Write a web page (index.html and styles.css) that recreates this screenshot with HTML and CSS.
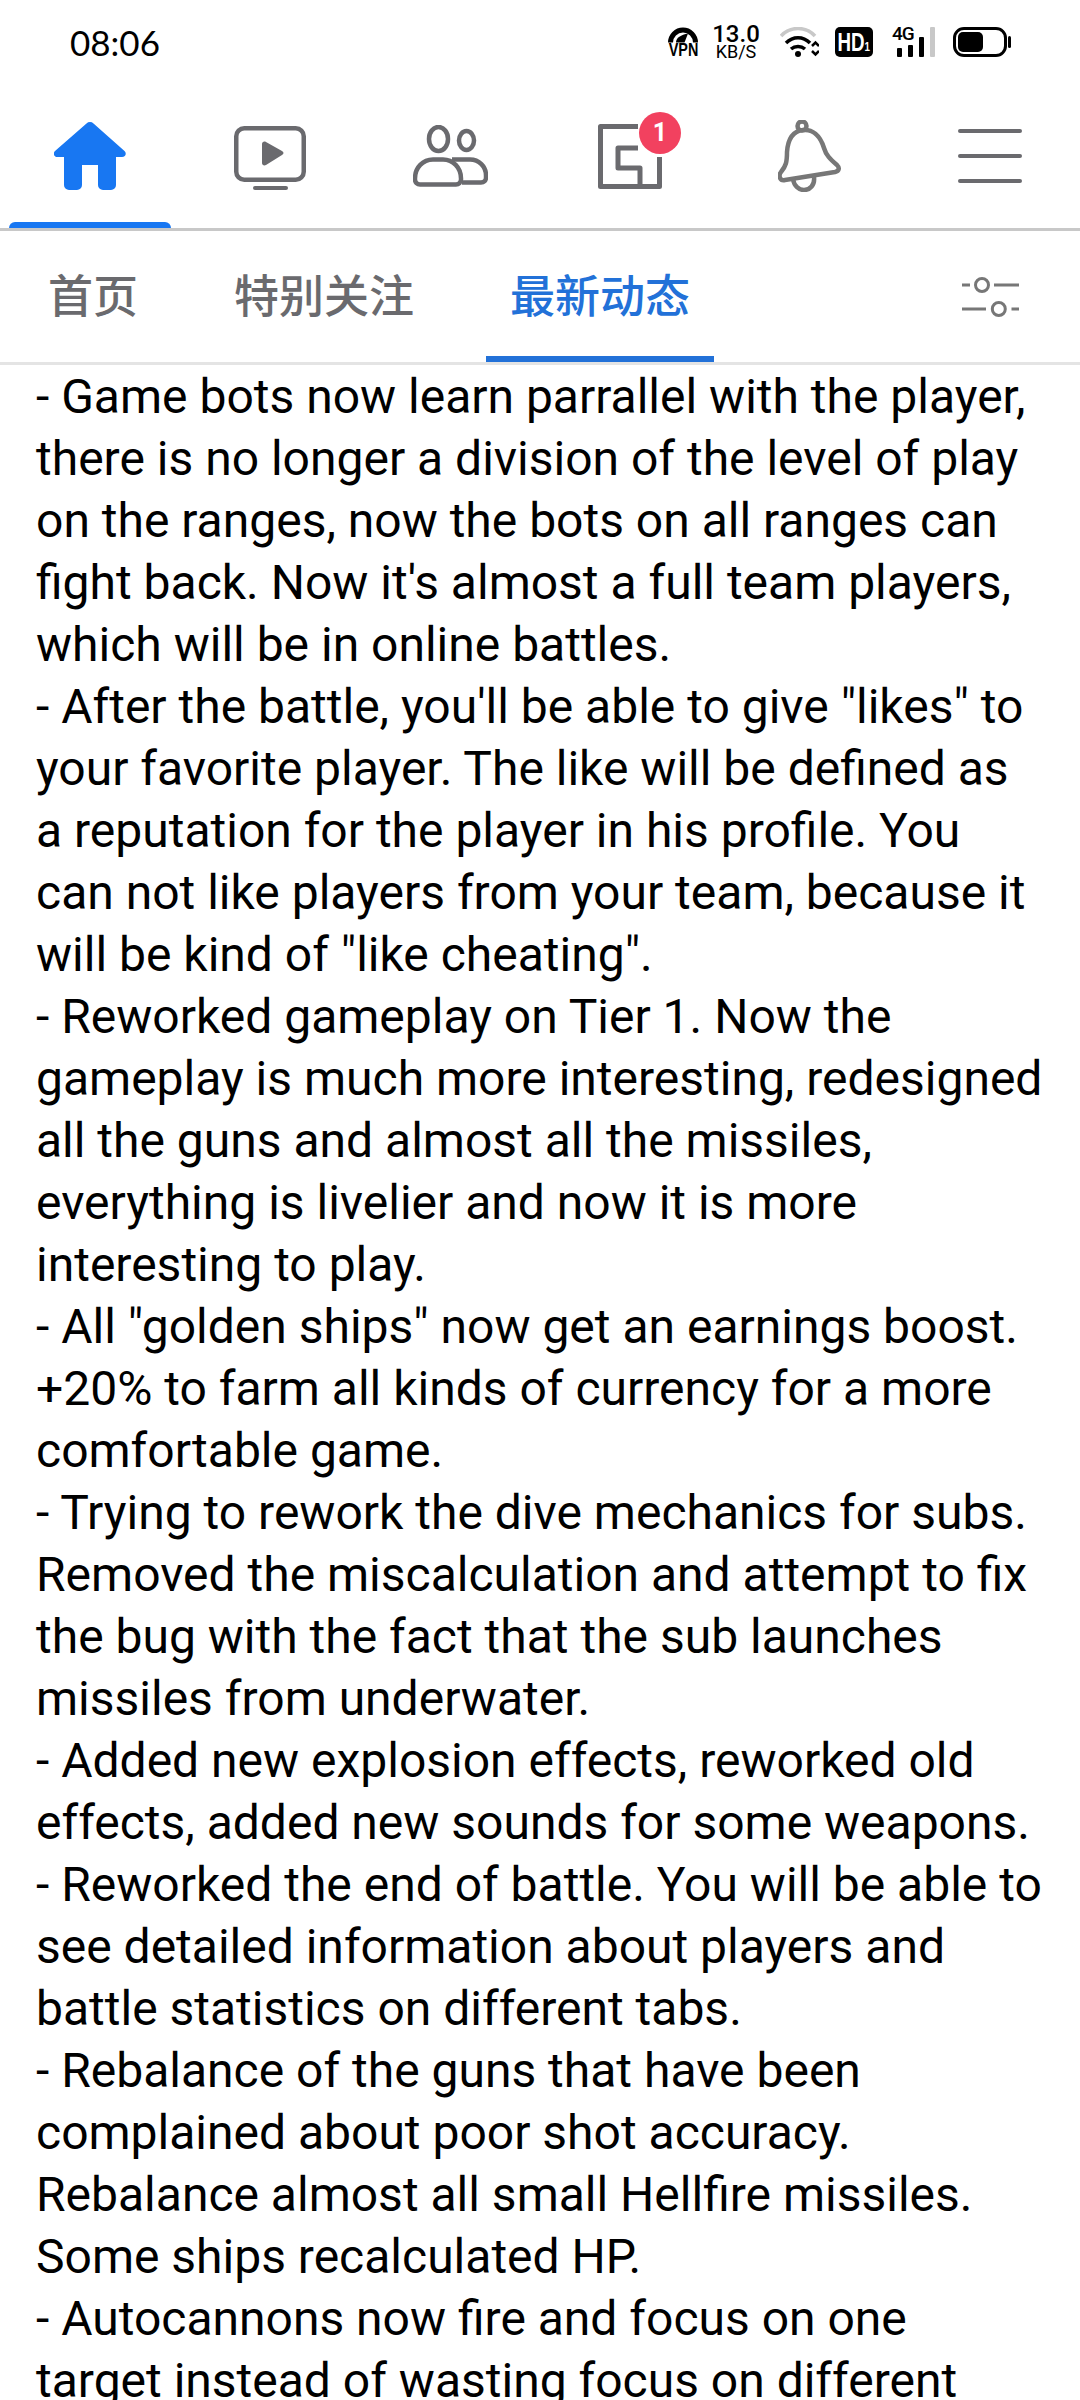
FILE: index.html
```html
<!DOCTYPE html>
<html lang="en">
<head>
    <meta charset="UTF-8">
    <title>Feed</title>
    <link rel="stylesheet" href="styles.css">
</head>
<body>
    <div class="status-bar">
        <span class="clock">08:06</span>
        <div class="status-icons">
            <div class="vpn">
                <svg width="30" height="16" viewBox="0 0 30 16">
                    <path d="M0 15.500A15 15 0 0 1 30 15.500h-5A10 10 0 0 0 5 15.500z" fill="#000"/>
                    <path d="M8 15.500C8 10.500 13 8 20 6.500L16.500 15.500z" fill="#000"/>
                </svg>
                <span>VPN</span>
            </div>
            <div class="speed"><span class="speed-num">13.0</span><span class="speed-unit">KB/S</span></div>
            <svg class="wifi" width="39" height="30" viewBox="0 0 39 30">
                <path d="M1 9C10 -1 26 -1 35 9" fill="none" stroke="#c8c8c8" stroke-width="3.500"/>
                <path d="M6 16C13 9 23 9 30 16" fill="none" stroke="#000" stroke-width="3.500"/>
                <path d="M11 22C15 18.500 21 18.500 25 22" fill="none" stroke="#000" stroke-width="3.500"/>
                <circle cx="18" cy="27" r="3" fill="#000"/>
                <path d="M32 19l3.500-3.500 3.500 3.500M32 24l3.500 3.500 3.500-3.500" fill="none" stroke="#000" stroke-width="2.500"/>
            </svg>
            <div class="hd"><span>HD<small>1</small></span></div>
            <div class="signal">
                <span class="signal-label">4G</span>
                <div class="signal-bars">
                    <i class="bar-1"></i><i class="bar-2"></i><i class="bar-3"></i><i class="bar-4"></i>
                </div>
            </div>
            <div class="battery"><div class="battery-level"></div></div>
            <div class="battery-cap"></div>
        </div>
    </div>

    <nav class="top-nav">
        <a class="nav-item active">
            <svg width="72" height="68" viewBox="0 0 72 68"><path d="M32.500 1.500a5 5 0 0 1 7 0L70.500 29c2.500 2.500 1 6-2.500 6H62v28a5 5 0 0 1-5 5H49a5 5 0 0 1-5-5V43H28v20a5 5 0 0 1-5 5H15a5 5 0 0 1-5-5V35H3.500C0 35-1.500 31.500 1 29z" fill="#1877f2"/></svg>
        </a>
        <a class="nav-item">
            <svg class="tv-icon" width="72" height="64" viewBox="0 0 72 64">
                <rect x="2.250" y="2.250" width="67.500" height="51.500" rx="8" fill="none" stroke="#6a6a6e" stroke-width="4.500"/>
                <path d="M28 18c0-2 2-3 4-2l16 9c2 1 2 3 0 4l-16 10c-2 1-4 0-4-2z" fill="#6a6a6e"/>
                <rect x="19" y="60" width="35" height="4" rx="2" fill="#6a6a6e"/>
            </svg>
        </a>
        <a class="nav-item">
            <svg width="75" height="62" viewBox="0 0 75 62" fill="none" stroke="#6a6a6e" stroke-width="4.500">
                <ellipse cx="25.500" cy="14" rx="9.500" ry="12"/>
                <ellipse cx="53.500" cy="15.500" rx="7.500" ry="9.500"/>
                <path d="M8 59.500h35a5 5 0 0 0 5-5v-1c0-11-8-19-18-19H20c-10 0-18 8-18 19v1a5 5 0 0 0 5 5z" stroke-linejoin="round"/>
                <path d="M39 34.500h18c9 0 16 7 16 16v2c0 3-2 5-5 5H49"/>
            </svg>
        </a>
        <a class="nav-item">
            <div class="gaming-icon">
                <svg width="64" height="65" viewBox="0 0 64 65" fill="none" stroke="#6a6a6e" stroke-width="5" stroke-linejoin="round">
                    <path d="M40 2.500H2.500v60h59V33M40 24H20v20h22v18"/>
                </svg>
                <span class="badge">1</span>
            </div>
        </a>
        <a class="nav-item">
            <svg width="64" height="72" viewBox="0 0 64 72" fill="none" stroke="#777" stroke-width="4.500" stroke-linejoin="round">
                <circle cx="24" cy="6" r="4.500"/>
                <path d="M7 60c-5 1-7-4-4-8 5-6 6-10 6-20 1-14 7-21 16-22 9-1 17 5 21 18 2 7 6 11 13 17 3 3 2 6-2 7z"/>
                <path d="M15 59c1 7 6 11 11 11 6 0 11-5 10-13"/>
            </svg>
        </a>
        <a class="nav-item">
            <div class="burger"><i></i><i></i><i></i></div>
        </a>
    </nav>

    <div class="sub-nav">
        <a class="sub-tab">首页</a>
        <a class="sub-tab">特别关注</a>
        <a class="sub-tab current">最新动态</a>
        <svg class="filter-icon" width="57" height="40" viewBox="0 0 57 40" fill="none" stroke="#777" stroke-width="3">
            <path d="M0 8h8M32 8h25M0 32h24M49.500 32h7.500"/>
            <circle cx="20" cy="8" r="6.500"/>
            <circle cx="36.800" cy="32" r="6.500"/>
        </svg>
    </div>

    <div class="post-text">
        <p>- Game bots now learn parrallel with the player,</p>
        <p>there is no longer a division of the level of play</p>
        <p>on the ranges, now the bots on all ranges can</p>
        <p>fight back. Now it's almost a full team players,</p>
        <p>which will be in online battles.</p>
        <p>- After the battle, you'll be able to give "likes" to</p>
        <p>your favorite player. The like will be defined as</p>
        <p>a reputation for the player in his profile. You</p>
        <p>can not like players from your team, because it</p>
        <p>will be kind of "like cheating".</p>
        <p>- Reworked gameplay on Tier 1. Now the</p>
        <p>gameplay is much more interesting, redesigned</p>
        <p>all the guns and almost all the missiles,</p>
        <p>everything is livelier and now it is more</p>
        <p>interesting to play.</p>
        <p>- All "golden ships" now get an earnings boost.</p>
        <p>+20% to farm all kinds of currency for a more</p>
        <p>comfortable game.</p>
        <p>- Trying to rework the dive mechanics for subs.</p>
        <p>Removed the miscalculation and attempt to fix</p>
        <p>the bug with the fact that the sub launches</p>
        <p>missiles from underwater.</p>
        <p>- Added new explosion effects, reworked old</p>
        <p>effects, added new sounds for some weapons.</p>
        <p>- Reworked the end of battle. You will be able to</p>
        <p>see detailed information about players and</p>
        <p>battle statistics on different tabs.</p>
        <p>- Rebalance of the guns that have been</p>
        <p>complained about poor shot accuracy.</p>
        <p>Rebalance almost all small Hellfire missiles.</p>
        <p>Some ships recalculated HP.</p>
        <p>- Autocannons now fire and focus on one</p>
        <p>target instead of wasting focus on different</p>
    </div>
</body>
</html>
```

FILE: styles.css
```css
* {
    margin: 0;
    padding: 0;
    box-sizing: border-box;
}

html, body {
    width: 1080px;
    height: 2400px;
    overflow: hidden;
}

body {
    background: #fff;
    color: #000;
    font-family: Roboto, 'Noto Sans CJK SC', sans-serif;
}

/* Status bar */
.status-bar {
    height: 84px;
    display: flex;
    justify-content: space-between;
    align-items: center;
    padding: 0 69px 0 70px;
}

.clock {
    font-family: Lato, sans-serif;
    font-size: 35px;
}

.status-icons {
    display: flex;
    align-items: center;
    height: 40px;
}

.vpn {
    width: 30px;
    height: 30px;
    margin-right: 16px;
    display: flex;
    flex-direction: column;
    align-items: center;
}

.vpn svg {
    display: block;
    flex-shrink: 0;
}

.vpn span {
    font-family: 'Liberation Sans', sans-serif;
    font-weight: 700;
    font-size: 18px;
    line-height: 14px;
    transform: scaleX(0.8);
}

.speed {
    width: 44px;
    margin-right: 22px;
    display: flex;
    flex-direction: column;
    align-items: center;
}

.speed-num {
    font-size: 24px;
    line-height: 20px;
    font-weight: 500;
    white-space: nowrap;
}

.speed-unit {
    font-size: 18px;
    line-height: 16px;
    white-space: nowrap;
}

.wifi {
    margin-right: 16px;
}

.hd {
    width: 38px;
    height: 30px;
    background: #000;
    color: #fff;
    border-radius: 5px;
    font-family: 'Liberation Sans', sans-serif;
    font-weight: 700;
    font-size: 25px;
    line-height: 30px;
    margin-right: 19px;
    display: flex;
    justify-content: center;
}

.hd span {
    transform: scaleX(0.75);
    white-space: nowrap;
}

.hd small {
    font-size: 13px;
}

.signal {
    position: relative;
    width: 43px;
    height: 30px;
    margin-right: 18px;
}

.signal-label {
    position: absolute;
    left: 0;
    top: -1px;
    font-size: 19px;
    font-weight: 500;
    line-height: 16px;
    letter-spacing: -1px;
}

.signal-bars {
    height: 30px;
    display: flex;
    align-items: flex-end;
    justify-content: flex-end;
    gap: 6px;
}

.signal-bars i {
    display: block;
    width: 5px;
    background: #000;
    border-radius: 1px;
}

.bar-1 { height: 9px; }
.bar-2 { height: 12px; }
.bar-3 { height: 20px; }
.signal-bars .bar-4 { height: 30px; background: #c8c8c8; }

.battery {
    width: 54px;
    height: 30px;
    border: 3px solid #000;
    border-radius: 11px;
    padding: 2px;
}

.battery-level {
    width: 25px;
    height: 20px;
    background: #000;
    border-radius: 5px;
}

.battery-cap {
    width: 3px;
    height: 12px;
    margin-left: 1px;
    background: #000;
    border-radius: 2px;
}

/* Top nav */
.top-nav {
    height: 147px;
    display: grid;
    grid-template-columns: repeat(6, 1fr);
    border-bottom: 3px solid #c8c8c8;
}

.nav-item {
    display: flex;
    justify-content: center;
    align-items: center;
    position: relative;
}

.nav-item svg {
    display: block;
}

.nav-item .tv-icon {
    margin-top: 4px;
}

.nav-item.active::after {
    content: "";
    position: absolute;
    left: 9px;
    right: 9px;
    bottom: 0;
    height: 6px;
    background: #1877f2;
    border-radius: 6px 6px 0 0;
}

.gaming-icon {
    position: relative;
}

.badge {
    position: absolute;
    top: -12px;
    left: 41px;
    width: 42px;
    height: 42px;
    border-radius: 50%;
    background: #f2415f;
    color: #fff;
    font-size: 25px;
    font-weight: 700;
    line-height: 42px;
    text-align: center;
}

.burger {
    width: 64px;
    display: flex;
    flex-direction: column;
    gap: 21px;
}

.burger i {
    display: block;
    height: 4px;
    background: #6a6a6e;
    border-radius: 2px;
}

/* Sub nav */
.sub-nav {
    height: 134px;
    display: flex;
    align-items: stretch;
    border-bottom: 3px solid #e4e4e4;
    padding-left: 24px;
}

.sub-tab {
    font-size: 45px;
    font-weight: 500;
    color: #6a6a6e;
    padding: 0 24px;
    margin-right: 48px;
    line-height: 133px;
    position: relative;
}

.sub-tab.current {
    color: #2271d8;
}

.sub-tab.current::after {
    content: "";
    position: absolute;
    left: 0;
    right: 0;
    bottom: 0;
    height: 6px;
    background: #2271d8;
}

.filter-icon {
    margin-left: auto;
    margin-right: 61px;
    align-self: center;
}

/* Post text */
.post-text {
    padding: 1px 24px 0 36px;
    font-size: 48px;
    line-height: 62px;
}

.post-text p {
    white-space: nowrap;
}
```
